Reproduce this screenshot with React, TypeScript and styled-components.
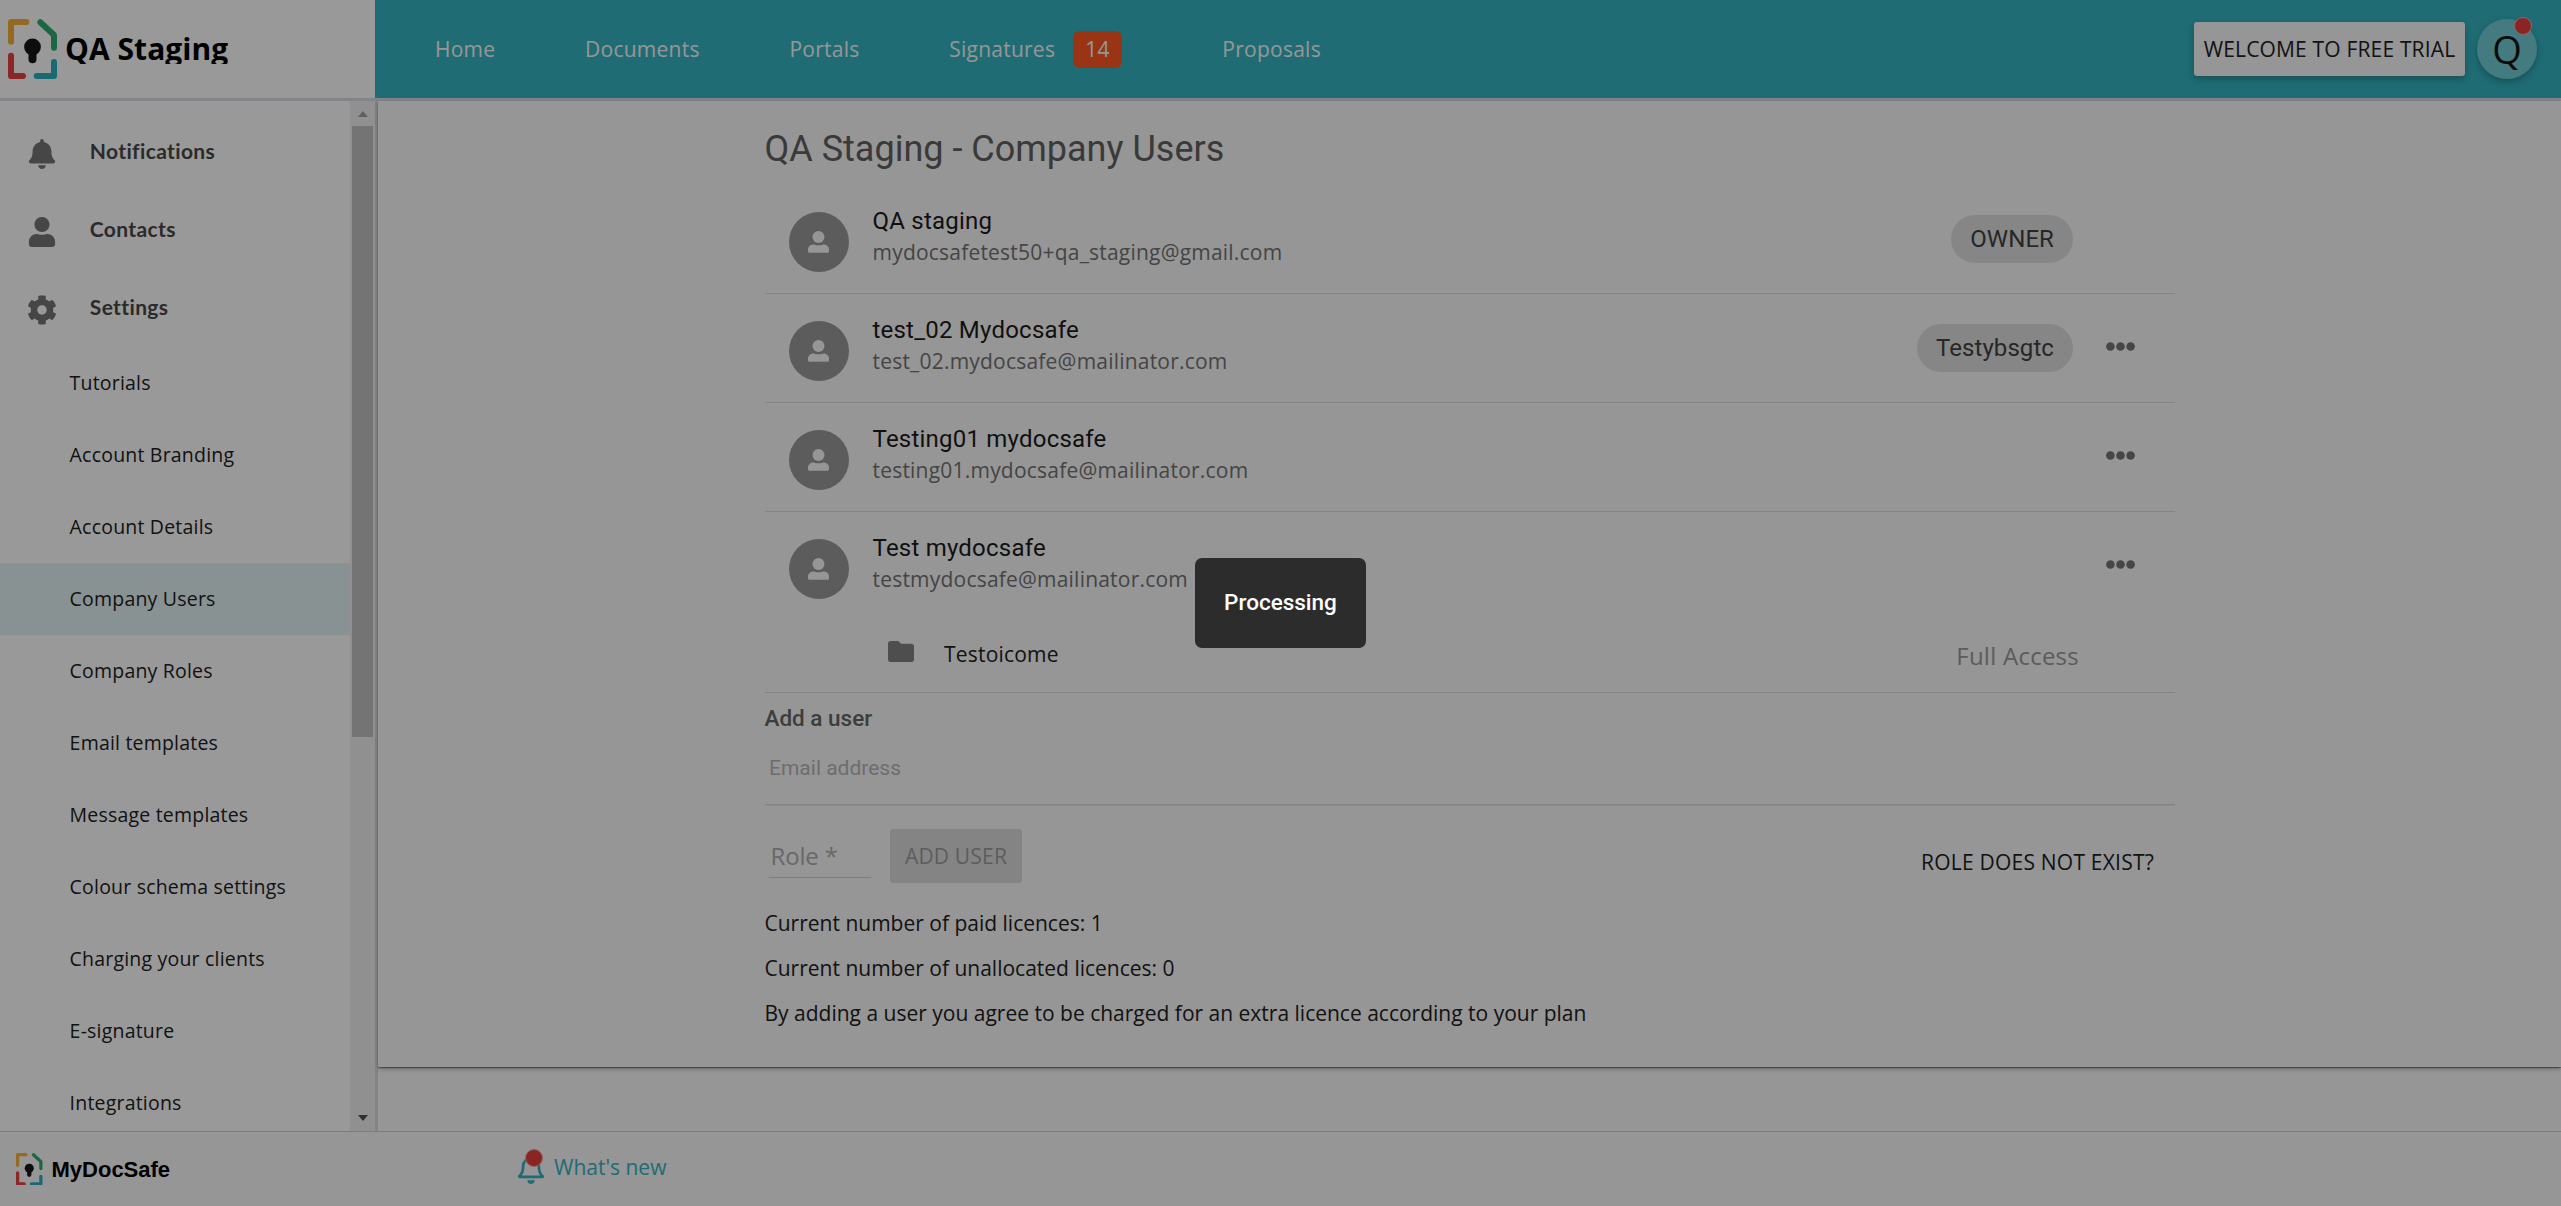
import React from "react";
import styled, { createGlobalStyle } from "styled-components";
import { FaBell, FaCog, FaRegBell, FaUser } from "react-icons/fa";

const openSans = `"Open Sans", "Noto Sans", sans-serif`;
const roboto = `Roboto, "Liberation Sans", sans-serif`;

const GlobalStyle = createGlobalStyle`
  *, *::before, *::after { box-sizing: border-box; }
  body { margin: 0; background: #fafafa; font-family: ${openSans}; font-size: 21px; color: #212121; overflow: hidden; }
  p, h1, h2, ul { margin: 0; padding: 0; }
  ul { list-style: none; }
  button { font-family: inherit; }
`;

const Page = styled.div`
  display: grid;
  grid-template-rows: 101px 1030px 75px;
  width: 100%;
  height: 1206px;
  white-space: nowrap;
`;

/* Header */

const Header = styled.header`
  display: flex;
  border-bottom: 3px solid #dbdce3;
  background: #34b4c1;
`;

const Brand = styled.div`
  display: flex;
  align-items: center;
  width: 375px;
  padding-left: 8px;
  background: #fff;
`;

const BrandName = styled.span`
  height: 30px;
  margin-left: 8px;
  overflow: hidden;
  color: #000;
  font-size: 30px;
  font-weight: 700;
  letter-spacing: 0.05px;
  line-height: 29px;
`;

const Nav = styled.nav`
  display: flex;
  flex: 1;
  align-items: center;
  gap: 89.7px;
  padding-left: 60px;
`;

const NavItem = styled.a`
  display: flex;
  align-items: center;
  color: #fafafa;
  letter-spacing: 0.25px;
  line-height: 30px;
`;

const NavBadge = styled.span`
  display: flex;
  align-items: center;
  justify-content: center;
  width: 48.5px;
  height: 37px;
  margin: 0 11px 0 18px;
  border-radius: 7px;
  background: #ff5722;
`;

const TrialButton = styled.button`
  align-self: center;
  width: 271px;
  height: 54px;
  padding: 0;
  border: 0;
  border-radius: 3px;
  background: #fafafa;
  box-shadow: 0 3px 7px rgba(0, 0, 0, 0.26);
  color: #212121;
  font-size: 21px;
  letter-spacing: 0.17px;
`;

const Account = styled.div`
  position: relative;
  display: flex;
  align-items: center;
  justify-content: center;
  align-self: center;
  width: 60px;
  height: 60px;
  margin: 0 24px 0 12px;
  border-radius: 50%;
  background: #72cdd6;
  box-shadow: 0 3px 7px rgba(0, 0, 0, 0.26);
  color: #111;
  font-size: 38px;
  line-height: 60px;
`;

const AccountDot = styled.span`
  position: absolute;
  top: -2px;
  right: 5px;
  width: 18px;
  height: 18px;
  border: 1px solid #f3a9a7;
  border-radius: 50%;
  background: #e53e3a;
`;

/* Sidebar */

const Body = styled.div`
  display: flex;
  min-height: 0;
`;

const Sidebar = styled.aside`
  display: flex;
  flex: none;
  width: 378px;
  border-right: 3px solid #dbdce3;
  background: #fff;
`;

const Menu = styled.div`
  width: 350px;
  padding-top: 12px;
  overflow: hidden;
`;

const MenuHeading = styled.div`
  display: grid;
  grid-template-columns: 25px 1fr;
  align-items: center;
  column-gap: 35px;
  height: 78px;
  padding-left: 29.8px;
  color: #494949;
  font-family: Lato, sans-serif;
  font-size: 21px;
  font-weight: 700;
  letter-spacing: 0.36px;

  svg {
    justify-self: center;
    margin-top: 3px;
    color: #757575;
    font-size: 30px;
  }

  span {
    padding-bottom: 4px;
  }
`;

const MenuItem = styled.li<{ $active?: boolean }>`
  height: 72px;
  padding-left: 69.6px;
  background: ${(p) => (p.$active ? "#e5f3f5" : "transparent")};
  font-size: 19.5px;
  letter-spacing: 0.2px;
  line-height: 71px;
`;

const ScrollTrack = styled.div`
  display: flex;
  flex-direction: column;
  align-items: center;
  width: 25px;
  padding: 10px 0;
  background: #f1f1f1;
`;

const ScrollThumb = styled.div`
  width: 21px;
  height: 611px;
  margin: 9px 0 auto;
  background: #c1c1c1;
`;

const ScrollArrow = styled.span<{ $down?: boolean }>`
  width: 0;
  height: 0;
  border: 5.5px solid transparent;
  border-top: ${(p) => (p.$down ? "6px solid #505050" : "0")};
  border-bottom: ${(p) => (p.$down ? "0" : "6px solid #a0a0a0")};
`;

/* Content */

const Main = styled.main`
  flex: 1;
`;

const Card = styled.section`
  height: 966px;
  background: #fafafa;
  box-shadow: 0 1px 1px rgba(0, 0, 0, 0.3), 0 1.5px 4.5px rgba(0, 0, 0, 0.25), 0 3px 1.5px -1.5px rgba(0, 0, 0, 0.12);
`;

const Column = styled.div`
  width: 1410px;
  margin: 0 auto;
`;

const Title = styled.h1`
  height: 84px;
  padding-top: 12px;
  color: #616161;
  font-family: ${roboto};
  font-size: 36px;
  font-weight: 400;
  line-height: 73px;
`;

const User = styled.li`
  border-bottom: 1px solid #dcdcdc;
`;

const UserRow = styled.div`
  display: flex;
  align-items: flex-start;
  height: 108px;
  padding-left: 24.5px;
`;

const Avatar = styled.span`
  display: flex;
  align-items: center;
  justify-content: center;
  width: 60px;
  height: 60px;
  margin: 27px 23.5px 0 0;
  border-radius: 50%;
  background: #999;
  color: #fafafa;

  svg {
    margin-right: 1px;
  }
`;

const Identity = styled.div`
  flex: 1;
  padding-top: 21px;
`;

const UserName = styled.p`
  color: #1c1c1c;
  font-family: ${roboto};
  font-size: 24px;
  letter-spacing: 0.22px;
  line-height: 30px;
`;

const UserEmail = styled.p`
  color: #737373;
  letter-spacing: 0.21px;
  line-height: 32px;
`;

const RoleChip = styled.span`
  height: 48px;
  margin: 30px 33px 0 0;
  padding: 0 19px;
  border-radius: 24px;
  background: #e0e0e0;
  color: #424242;
  font-family: ${roboto};
  font-size: 24px;
  letter-spacing: 0.08px;
  line-height: 48px;
`;

const MoreSlot = styled.span`
  display: flex;
  width: 29px;
  margin: 48px 39.5px 0 0;
`;

const AccessRow = styled.div`
  display: flex;
  align-items: center;
  height: 72px;
  padding-left: 123.5px;

  svg {
    margin-bottom: 9px;
    color: #828282;
  }
`;

const CompanyName = styled.span`
  flex: 1;
  margin-left: 30px;
  padding-bottom: 4px;
  letter-spacing: 0.2px;
`;

const AccessLevel = styled.span`
  margin-right: 95.5px;
  padding-bottom: 2px;
  color: #999;
  font-size: 24px;
  letter-spacing: 0.25px;
`;

const SectionTitle = styled.h2`
  color: #666;
  font-family: ${roboto};
  font-size: 22.5px;
  font-weight: 500;
  line-height: 50px;
`;

const EmailField = styled.div`
  height: 62px;
  padding-left: 4.5px;
  border-bottom: 1px solid #dadada;
  box-shadow: 0 1px 0 #ececec;
  color: #b7b7b7;
  font-family: ${roboto};
  line-height: 50px;
`;

const AddForm = styled.div`
  display: flex;
  align-items: flex-start;
  height: 54px;
  margin-top: 24px;
`;

const RoleSelect = styled.div`
  width: 102px;
  height: 49px;
  margin: 0 19px 0 4.5px;
  padding: 5px 0 0 1.5px;
  border-bottom: 1px solid #d2d2d2;
  color: #adadad;
  font-size: 24px;
  letter-spacing: -0.15px;
  line-height: 43px;
`;

const AddButton = styled.button`
  width: 132px;
  height: 54px;
  padding: 0;
  border: 0;
  border-radius: 3px;
  background: #dcdcdc;
  color: #9b9b9b;
  font-size: 21px;
  letter-spacing: 0.18px;
`;

const MissingRole = styled.a`
  margin: 6px 20.5px 0 auto;
  letter-spacing: 0.22px;
  line-height: 54px;
`;

const Notes = styled.div`
  margin-top: 18px;
  line-height: 45px;
`;

/* Footer */

const Footer = styled.footer`
  display: flex;
  align-items: center;
  z-index: 1;
  padding-left: 16px;
  border-top: 1px solid #cfcfd0;
  background: #fafafa;
`;

const FooterBrand = styled.div`
  display: flex;
  align-items: center;
  width: 502px;
`;

const FooterName = styled.span`
  margin-left: 9px;
  padding-top: 2px;
  color: #000;
  font-family: "Liberation Sans", Arial, sans-serif;
  font-size: 22px;
  font-weight: 700;
`;

const NewsLink = styled.a`
  display: flex;
  align-items: center;
  gap: 10px;
  padding-bottom: 4px;
  color: #34b4c1;
`;

const NewsIcon = styled.span`
  position: relative;
  display: flex;
  justify-content: center;
  width: 26px;
  padding-top: 3px;
  font-size: 30px;
`;

const NewsDot = styled.span`
  position: absolute;
  top: -2px;
  left: 7px;
  width: 18px;
  height: 18px;
  border: 1px solid #f0a5a3;
  border-radius: 50%;
  background: #e53e3a;
`;

/* Loading layer */

const Backdrop = styled.div`
  position: fixed;
  inset: 0;
  z-index: 10;
  display: flex;
  align-items: center;
  justify-content: center;
  background: rgba(0, 0, 0, 0.4);
`;

const Toast = styled.div`
  width: 171px;
  height: 90px;
  border-radius: 7px;
  background: #2c2c2c;
  color: #fff;
  font-family: ${roboto};
  font-size: 22.5px;
  font-weight: 500;
  line-height: 89px;
  text-align: center;
`;

const Logo = ({ width, height }: { width: number; height: number }) => (
  <svg width={width} height={height} viewBox="0 0 49 60" fill="none" strokeWidth="6" strokeLinecap="round" strokeLinejoin="round">
    <path d="M3 22.7V3H18.3" stroke="#fbb03b" />
    <path d="M32.3 3.3L46 16V28.7" stroke="#2eac6d" />
    <path d="M3 36.7V57H15" stroke="#e8413f" />
    <path d="M28.7 57H46V43" stroke="#2bb0be" />
    <circle cx="24.5" cy="28" r="8.4" fill="#17171a" />
    <path d="M24.5 30V40.3" stroke="#17171a" strokeWidth="8" />
  </svg>
);

const PersonIcon = () => (
  <svg width="21" height="22" viewBox="0 0 21 22" fill="currentColor">
    <circle cx="10.5" cy="6" r="6" />
    <path d="M0 20V18.5C0 15.5 2.4 13.4 5.4 13.4H6C8.8 14.6 12.2 14.6 15 13.4H15.6C18.6 13.4 21 15.5 21 18.5V20C21 21.2 20.4 21.8 19.4 21.8H1.6C.6 21.8 0 21.2 0 20Z" />
  </svg>
);

const FolderIcon = () => (
  <svg width="26" height="21" viewBox="2 4 20 16" preserveAspectRatio="none" fill="currentColor">
    <path d="M10 4H4c-1.1 0-1.99.9-1.99 2L2 18c0 1.1.9 2 2 2h16c1.1 0 2-.9 2-2V8c0-1.1-.9-2-2-2h-8l-2-2z" />
  </svg>
);

const MoreIcon = () => (
  <svg width="29" height="9" viewBox="0 0 29 9" fill="#757575">
    <circle cx="4.4" cy="4.5" r="4.3" />
    <circle cx="14.5" cy="4.5" r="4.3" />
    <circle cx="24.6" cy="4.5" r="4.3" />
  </svg>
);

const settings = [
  "Tutorials",
  "Account Branding",
  "Account Details",
  "Company Users",
  "Company Roles",
  "Email templates",
  "Message templates",
  "Colour schema settings",
  "Charging your clients",
  "E-signature",
  "Integrations",
];

type CompanyUser = { name: string; email: string; role?: string; menu?: boolean; access?: { company: string; level: string } };

const users: CompanyUser[] = [
  { name: "QA staging", email: "mydocsafetest50+qa_staging@gmail.com", role: "OWNER" },
  { name: "test_02 Mydocsafe", email: "test_02.mydocsafe@mailinator.com", role: "Testybsgtc", menu: true },
  { name: "Testing01 mydocsafe", email: "testing01.mydocsafe@mailinator.com", menu: true },
  {
    name: "Test mydocsafe",
    email: "testmydocsafe@mailinator.com",
    menu: true,
    access: { company: "Testoicome", level: "Full Access" },
  },
];

export default function App() {
  return (
    <>
      <GlobalStyle />
      <Page>
        <Header>
          <Brand>
            <Logo width={49} height={60} />
            <BrandName>QA Staging</BrandName>
          </Brand>
          <Nav>
            <NavItem>Home</NavItem>
            <NavItem>Documents</NavItem>
            <NavItem>Portals</NavItem>
            <NavItem>
              Signatures<NavBadge>14</NavBadge>
            </NavItem>
            <NavItem>Proposals</NavItem>
          </Nav>
          <TrialButton>WELCOME TO FREE TRIAL</TrialButton>
          <Account>
            Q
            <AccountDot />
          </Account>
        </Header>

        <Body>
          <Sidebar>
            <Menu>
              <MenuHeading>
                <FaBell />
                <span>Notifications</span>
              </MenuHeading>
              <MenuHeading>
                <FaUser />
                <span>Contacts</span>
              </MenuHeading>
              <MenuHeading>
                <FaCog />
                <span>Settings</span>
              </MenuHeading>
              <ul>
                {settings.map((label) => (
                  <MenuItem key={label} $active={label === "Company Users"}>
                    {label}
                  </MenuItem>
                ))}
              </ul>
            </Menu>
            <ScrollTrack>
              <ScrollArrow />
              <ScrollThumb />
              <ScrollArrow $down />
            </ScrollTrack>
          </Sidebar>

          <Main>
            <Card>
              <Column>
                <Title>QA Staging - Company Users</Title>
                <ul>
                  {users.map((user) => (
                    <User key={user.email}>
                      <UserRow>
                        <Avatar>
                          <PersonIcon />
                        </Avatar>
                        <Identity>
                          <UserName>{user.name}</UserName>
                          <UserEmail>{user.email}</UserEmail>
                        </Identity>
                        {user.role && <RoleChip>{user.role}</RoleChip>}
                        <MoreSlot>{user.menu && <MoreIcon />}</MoreSlot>
                      </UserRow>
                      {user.access && (
                        <AccessRow>
                          <FolderIcon />
                          <CompanyName>{user.access.company}</CompanyName>
                          <AccessLevel>{user.access.level}</AccessLevel>
                        </AccessRow>
                      )}
                    </User>
                  ))}
                </ul>
                <SectionTitle>Add a user</SectionTitle>
                <EmailField>Email address</EmailField>
                <AddForm>
                  <RoleSelect>Role *</RoleSelect>
                  <AddButton disabled>ADD USER</AddButton>
                  <MissingRole>ROLE DOES NOT EXIST?</MissingRole>
                </AddForm>
                <Notes>
                  <p>Current number of paid licences: 1</p>
                  <p>Current number of unallocated licences: 0</p>
                  <p>By adding a user you agree to be charged for an extra licence according to your plan</p>
                </Notes>
              </Column>
            </Card>
          </Main>
        </Body>

        <Footer>
          <FooterBrand>
            <Logo width={26.5} height={32.5} />
            <FooterName>MyDocSafe</FooterName>
          </FooterBrand>
          <NewsLink>
            <NewsIcon>
              <FaRegBell />
              <NewsDot />
            </NewsIcon>
            What's new
          </NewsLink>
        </Footer>
      </Page>
      <Backdrop>
        <Toast>Processing</Toast>
      </Backdrop>
    </>
  );
}
